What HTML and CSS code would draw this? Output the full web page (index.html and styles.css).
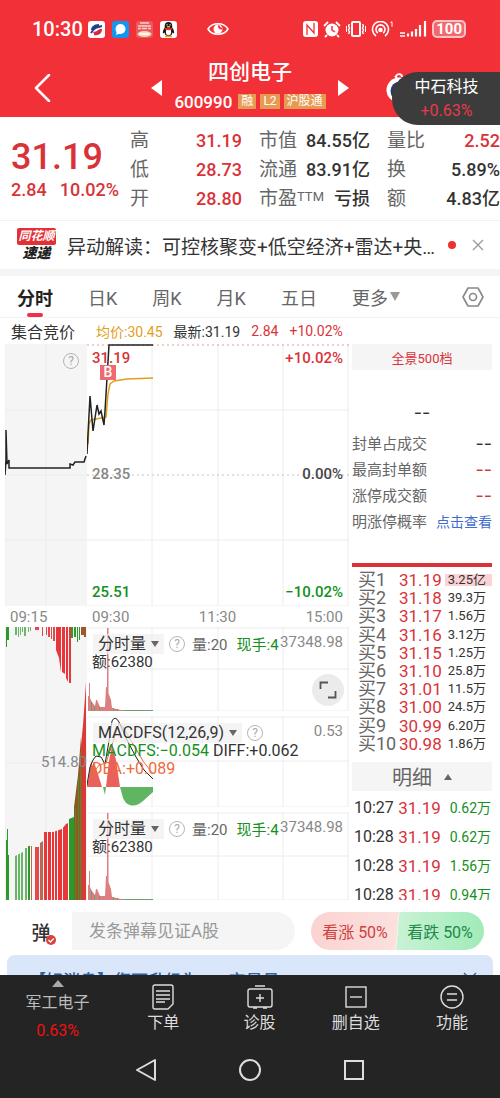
FILE: index.html
```html
<!DOCTYPE html>
<html lang="zh-CN">
<head>
  <meta charset="UTF-8">
  <meta name="viewport" content="width=device-width, initial-scale=1.0">
  <title>四创电子 600990</title>
  <link rel="stylesheet" href="styles.css">
</head>
<body>
  <header class="top">
    <div class="status-bar">
      <span class="clock">10:30</span>
      <div class="app-icons">
        <svg width="17" height="17" viewBox="0 0 17 17"><rect width="17" height="17" rx="3" fill="#fff"/><path d="M11 3C6 3 3 6 3 9c3 1 4-3 9-2-1-1-1-3-1-4z" fill="#1f3f90"/><path d="M6 14c5 1 8-2 8-6-3-1-4 3-9 3 1 1 1 2 1 3z" fill="#d9293a"/><path d="M3 12c3-5 6-6 11-7" stroke="#1f3f90" stroke-width="2" fill="none"/></svg>
        <svg width="17" height="17" viewBox="0 0 17 17"><rect width="17" height="17" rx="3" fill="#1296f0"/><circle cx="8.5" cy="8" r="5" fill="#fff"/><path d="M5 10l-1 4 5-2z" fill="#fff"/></svg>
        <svg width="17" height="17" viewBox="0 0 17 17"><rect width="17" height="17" rx="3" fill="#e85a5d"/><path d="M4 2h9M2 5h13M2 7.500h3M6 7.500h5M12 7.500h3" stroke="#fbd0c8" stroke-width="1.500"/><ellipse cx="8.500" cy="13" rx="7" ry="3" fill="#f7d9b9"/><path d="M4 13h9" stroke="#fff" stroke-width="1.500"/></svg>
        <svg width="17" height="17" viewBox="0 0 17 17"><rect width="17" height="17" rx="3" fill="#fff"/><path d="M8.500 1C5 1 4.500 4 4.800 6.500 3 9 2.500 11 3 12.500l1.500-1C5 14 6 15 8.500 15s3.500-1 4-3.500l1.500 1c.500-1.500 0-3.500-1.800-6C12.500 4 12 1 8.500 1z" fill="#171717"/><ellipse cx="8.500" cy="11" rx="2.600" ry="3.200" fill="#fff"/><path d="M5 7.500c2 1 5 1 7 0" stroke="#e33" stroke-width="1.500" fill="none"/><path d="M5 15.500h7M7 5.700h3" stroke="#f7a81b" stroke-width="1.400"/><path d="M7 3.200v1.300M10 3.200v1.300" stroke="#fff"/></svg>
      </div>
      <svg class="eye" width="22" height="16" viewBox="0 0 22 16" fill="none" stroke="#fff"><path d="M1 8C5 1 17 1 21 8 17 15 5 15 1 8z" stroke-width="1.600"/><circle cx="11" cy="8" r="4.500" fill="#fff" stroke="none"/><path d="M12 4.500a2.500 2.500 0 0 0 3 3" stroke="#f23037" stroke-width="2"/></svg>
      <div class="system-icons">
        <svg width="15" height="16" viewBox="0 0 15 16"><rect width="15" height="16" rx="3" fill="#fff"/><path d="M4 14V4l7 8V2" fill="none" stroke="#f23037" stroke-width="1.300"/></svg>
        <svg width="18" height="17" viewBox="0 0 18 17"><circle cx="9" cy="9" r="6.500" fill="#fff"/><path d="M1 5l4-4M17 5l-4-4M4 14l-2 2M14 14l2 2" stroke="#fff" stroke-width="1.800"/><path d="M9 5v4l3 2" stroke="#f23037" stroke-width="1.500" fill="none"/></svg>
        <svg width="20" height="16" viewBox="0 0 20 16" fill="none" stroke="#fff"><rect x="6" y="1" width="8" height="14" rx="1" stroke-width="2"/><path d="M3.500 3l-1 2 1 2-1 2 1 2-1 2M16.500 3l1 2-1 2 1 2-1 2 1 2" stroke-width="1.400"/><path d="M.5 5v6M19.500 5v6"/></svg>
        <svg width="23" height="17" viewBox="0 0 23 17" fill="none" stroke="#fff" stroke-width="1.600"><path d="M5 15a8 8 0 1 1 9 0M6.800 12a4.500 4.500 0 1 1 5.400 0"/><circle cx="9.500" cy="9" r="1.500" fill="#fff"/><path d="M19.500 1.500l1.500-.700v5" stroke-width="1"/></svg>
        <svg width="28" height="16" viewBox="0 0 28 16" stroke="#fff" stroke-width="2.200"><path d="M9 15.500v-3M13 15.500v-5M17 15.500V8M21 15.500V4M26 15.500V0"/><path d="M1 12h5M1 15h5" stroke-width="1.500"/></svg>
        <span class="battery">100</span>
      </div>
    </div>
    <div class="title-bar">
      <button class="icon-btn back" aria-label="返回"><svg width="17" height="28" viewBox="0 0 17 28" fill="none" stroke="#fff" stroke-width="2.500" stroke-linecap="round" stroke-linejoin="round"><path d="M15 1L2 14l13 13"/></svg></button>
      <div class="stock-switch">
        <button class="icon-btn" aria-label="上一只"><svg width="11" height="16" viewBox="0 0 11 16"><path d="M11 0v16L0 8z" fill="#fff"/></svg></button>
        <div class="stock-title">
          <h1>四创电子</h1>
          <p><span class="code">600990</span><span class="tag">融</span><span class="tag">L2</span><span class="tag">沪股通</span></p>
        </div>
        <button class="icon-btn" aria-label="下一只"><svg width="11" height="16" viewBox="0 0 11 16"><path d="M0 0v16l11-8z" fill="#fff"/></svg></button>
      </div>
      <button class="icon-btn robot" aria-label="智能助手"><svg width="32" height="30" viewBox="0 0 32 30"><circle cx="16" cy="17" r="12.500" fill="#fff"/><circle cx="17" cy="18" r="9.500" fill="#263b63"/><path d="M14 5l-2-2M13 3c2-3 6-2 6 1" stroke="#fff" stroke-width="1.800" fill="none"/></svg></button>
    </div>
  </header>

  <a class="float-quote" href="#">
    <span>中石科技</span>
    <span class="change">+0.63%</span>
  </a>

  <section class="quote">
    <div class="last">
      <strong>31.19</strong>
      <div class="diff"><span>2.84</span><span>10.02%</span></div>
    </div>
    <dl class="stats">
      <div><dt>高</dt><dd class="up">31.19</dd></div>
      <div><dt>市值</dt><dd>84.55亿</dd></div>
      <div><dt>量比</dt><dd class="up">2.52</dd></div>
      <div><dt>低</dt><dd class="up">28.73</dd></div>
      <div><dt>流通</dt><dd>83.91亿</dd></div>
      <div><dt>换</dt><dd>5.89%</dd></div>
      <div><dt>开</dt><dd class="up">28.80</dd></div>
      <div><dt>市盈<sup>TTM</sup></dt><dd>亏损</dd></div>
      <div><dt>额</dt><dd>4.83亿</dd></div>
    </dl>
  </section>

  <section class="news">
    <div class="news-logo"><b>同花顺</b><i>速递</i></div>
    <a href="#">异动解读：可控核聚变+低空经济+雷达+央…</a>
    <span class="dot"></span>
    <button class="icon-btn" aria-label="关闭"><svg width="12" height="12" viewBox="0 0 12 12" stroke="#999" stroke-width="1.300"><path d="M1 1l10 10M11 1L1 11"/></svg></button>
  </section>

  <nav class="tabs">
    <button class="tab active">分时</button>
    <button class="tab">日K</button>
    <button class="tab">周K</button>
    <button class="tab">月K</button>
    <button class="tab">五日</button>
    <button class="tab">更多<svg width="12" height="9" viewBox="0 0 12 9"><path d="M2 0h10L7 9z" fill="#999"/></svg></button>
    <button class="icon-btn settings" aria-label="设置"><svg width="22" height="22" viewBox="0 0 22 22" fill="none" stroke="#888" stroke-width="1.600" stroke-linejoin="round"><path d="M6 2h10l5 9-5 9H6l-5-9z"/><circle cx="11" cy="11" r="3.500"/></svg></button>
  </nav>

  <div class="legend">
    <span class="legend-name">集合竞价</span>
    <span class="avg">均价:30.45</span>
    <span>最新:31.19</span>
    <span class="up">2.84</span>
    <span class="up">+10.02%</span>
  </div>

  <main class="board">
    <div class="auction">
      <div class="plot price">
        <svg class="fill" viewBox="0 0 82 262" preserveAspectRatio="none">
          <path class="grid" d="M0 0V262M41 0V262M0 66H82M0 131H82M0 196H82"/>
          <path class="price-line" d="M0 131L1 116V86L2 120 4 116V124H65V120L68 121 70 118H79L81 112"/>
        </svg>
        <span class="help auction-help">?</span>
      </div>
      <div class="axis"><span>09:15</span></div>
      <div class="plot auction-volume">
        <svg class="fill" viewBox="0 0 82 273" preserveAspectRatio="none">
          <path class="grid" d="M0 0V273M41 0V273M0 136H82"/>
          <path fill="#2b9a2b" d="M1 0h3v13H2v7H1zM66 0h2v11h-2zM69 0h2v10h-2zM72 0h1v15h-1zM74 0h1v13h-1z"/>
          <path fill="#6bb56b" d="M10 0h2v8h-2zM13 0h1v10h-1zM15 0h1v8h-1zM17 0h1v5h-1zM19 0h2v9h-2zM23 0h1v5h-1zM25 0h1v4h-1z"/>
          <path fill="#e0494c" d="M30 0h4v3h-4zM37 0h1v9h-1zM41 0h1v8h-1zM43 0h2v10h-2zM46 0h1v12h-1zM48 0h2v14h-2z"/>
          <path fill="#e8363b" d="M51 0h5v45l-2-14-3-8zM57 0h3v47l-3-2zM61 0h2v55l-2-4zM64 0h2v56h-2z"/>
          <path fill="#9a5a2b" d="M76 0h5v10h-2V8h-3z"/>
          <path fill="#2b9a2b" d="M1 273V213h1V202h1V228h1V273zM23 273V219h2V273zM64 273V192l5-2V273z"/>
          <path fill="#6bb56b" d="M10 273V229l8-4V273zM20 273V221h2V273z"/>
          <path fill="#b86a55" d="M26 273V219h1V273zM35 273V216l3-2V273z"/>
          <path fill="#e0494c" d="M30 273V220h4V273z"/>
          <path fill="#e8363b" d="M39 273V205H48L57 202 61 197 63 196V273z"/>
          <path fill="#8a5a22" d="M69 273V180L73 148 76 110V273z"/>
          <path fill="#d93a36" d="M76 273V118L78 98 80 70 81 55V273z"/>
          <path fill="none" stroke="#4a8f2c" d="M70.500 182V273M73.500 150V273M75.500 125V273"/>
          <path fill="none" stroke="#f5f5f5" d="M12.500 225V273M15.500 225V273M42.500 204V273M46.500 204V273M49.500 203V273M52.500 202V273M57.500 200V273M63.500 190V273"/>
        </svg>
        <span class="label volume-label">514.80</span>
      </div>
    </div>

    <div class="session">
      <div class="plot price">
        <svg class="fill" viewBox="0 0 262 262" preserveAspectRatio="none">
          <path class="grid" d="M65 0V262M131 0V262M196 0V262M261 0V262M0 66H262M0 196H262M0 262H262"/>
          <path class="dashed" d="M0 131H262"/>
          <path class="dashed limit" d="M0 1H262"/>
          <path class="avg-line" d="M1 100L2 80 4 76 9 75 19 73 21 50 23 40 27 37 40 35 66 34"/>
          <path class="price-line" d="M0 110L1 90 3 52 6 87 10 61 12 70 14 67 17 81 18 67 20 34 22 1H66"/>
        </svg>
        <span class="label top-left up">31.19</span>
        <span class="label top-right up">+10.02%</span>
        <span class="label mid-left">28.35</span>
        <span class="label mid-right">0.00%</span>
        <span class="label bottom-left down">25.51</span>
        <span class="label bottom-right down">−10.02%</span>
        <span class="buy-mark">B</span>
      </div>
      <div class="axis"><span>09:30</span><span>11:30</span><span>15:00</span></div>
      <div class="subs">
        <div class="plot">
          <svg class="fill" viewBox="0 0 262 84" preserveAspectRatio="none">
            <path class="grid" d="M65 0V84M131 0V84M196 0V84M261 0V84M0 1H262M0 42H262M0 84H262"/>
            <path fill="#dd7f80" d="M1 84V69H2V56H3V71L5 75 8 79 9 73H10L13 80H18L19 60H20V1H21.500V66L24 73 25 81 34 83 66 83V84z"/>
            <path stroke="#6f9d6f" d="M4.500 84V75M7.500 84V79M12.500 84V80M26.500 84V81M30.500 84V82M36 83.500H66"/>
          </svg>
          <div class="indicator">
            <button class="pick">分时量<i></i></button><span class="help">?</span><span class="gray">量:20</span><span class="down">现手:4</span>
          </div>
          <p class="indicator-values">额:62380</p>
          <span class="label scale">37348.98</span>
        </div>
        <div class="plot">
          <svg class="fill" viewBox="0 0 262 91" preserveAspectRatio="none">
            <path class="grid" d="M65 0V91M131 0V91M196 0V91M261 0V91M0 1H262M0 45H262M0 91H262"/>
            <path fill="#e9605c" d="M0 71L2 60 4 45 5 50 7 46 10 55 15 71zM19 71L22 45 25 30 29 44 33 71z"/>
            <path fill="#5fb562" d="M16 71h3l-1 8zM33 71H66V76L56 85C48 92 40 91 36 82z"/>
            <path class="dea-line" d="M0 70L7 56 12 49 19 47 24 32 32 7 36 11 46 28 56 45 66 58"/>
            <path class="dif-line" d="M0 69L3 51 6 44 9 40 14 41 18 48 22 25 25 5Q28-1 32 6L40 24 49 41 57 54 66 63"/>
          </svg>
          <div class="indicator">
            <button class="pick">MACDFS(12,26,9)<i></i></button><span class="help">?</span>
          </div>
          <p class="indicator-values macd"><span class="down">MACDFS:−0.054</span> <span>DIFF:+0.062</span> <span class="dea">DEA:+0.089</span></p>
          <span class="label scale">0.53</span>
        </div>
        <div class="plot">
          <svg class="fill" viewBox="0 0 262 88" preserveAspectRatio="none">
            <path class="grid" d="M65 0V88M131 0V88M196 0V88M261 0V88M0 1H262M0 44H262M0 88H262"/>
            <path fill="#dd7f80" d="M1 88V73H2V59H3V75L5 79 8 83 9 77H10L13 84H18L19 64H20V1H21.500V70L24 77 25 85 34 87 66 87V88z"/>
            <path stroke="#6f9d6f" d="M4.500 88V79M7.500 88V83M12.500 88V84M26.500 88V85M30.500 88V86M36 87.500H66"/>
          </svg>
          <div class="indicator">
            <button class="pick">分时量<i></i></button><span class="help">?</span><span class="gray">量:20</span><span class="down">现手:4</span>
          </div>
          <p class="indicator-values">额:62380</p>
          <span class="label scale">37348.98</span>
        </div>
        <button class="expand" aria-label="全屏"><svg width="18" height="18" viewBox="0 0 18 18" fill="none" stroke="#555" stroke-width="1.800"><path d="M1.500 8V1.500H9M16.500 10v6.500H9"/></svg></button>
      </div>
    </div>

    <aside class="book">
      <button class="depth">全景500档</button>
      <p class="depth-value">--</p>
      <dl class="limit-info">
        <div><dt>封单占成交</dt><dd>--</dd></div>
        <div><dt>最高封单额</dt><dd class="up">--</dd></div>
        <div><dt>涨停成交额</dt><dd class="up">--</dd></div>
        <div><dt>明涨停概率</dt><dd><a href="#">点击查看</a></dd></div>
      </dl>
      <table class="bids">
        <tr><th>买1</th><td>31.19</td><td class="first">3.25亿</td></tr>
        <tr><th>买2</th><td>31.18</td><td>39.3万</td></tr>
        <tr><th>买3</th><td>31.17</td><td>1.56万</td></tr>
        <tr><th>买4</th><td>31.16</td><td>3.12万</td></tr>
        <tr><th>买5</th><td>31.15</td><td>1.25万</td></tr>
        <tr><th>买6</th><td>31.10</td><td>25.8万</td></tr>
        <tr><th>买7</th><td>31.01</td><td>11.5万</td></tr>
        <tr><th>买8</th><td>31.00</td><td>24.5万</td></tr>
        <tr><th>买9</th><td>30.99</td><td>6.20万</td></tr>
        <tr><th>买10</th><td>30.98</td><td>1.86万</td></tr>
      </table>
      <button class="detail">明细<svg width="8" height="6" viewBox="0 0 8 6"><path d="M4 0l4 6H0z" fill="#666"/></svg></button>
      <div class="trades">
        <table>
          <tr><td>10:27</td><td class="up">31.19</td><td class="down">0.62万</td></tr>
          <tr><td>10:28</td><td class="up">31.19</td><td class="down">0.62万</td></tr>
          <tr><td>10:28</td><td class="up">31.19</td><td class="down">1.56万</td></tr>
          <tr><td>10:28</td><td class="up">31.19</td><td class="down">0.94万</td></tr>
        </table>
      </div>
    </aside>
  </main>

  <section class="chat">
    <button class="danmu" aria-label="弹幕开关">弹<svg width="10" height="10" viewBox="0 0 10 10"><circle cx="5" cy="5" r="5" fill="#d9423a"/><path d="M2.500 5l2 2 3.200-3.500" stroke="#fff" stroke-width="1.300" fill="none"/></svg></button>
    <input type="text" placeholder="发条弹幕见证A股" aria-label="发条弹幕">
    <div class="vote">
      <button class="vote-up">看涨 50%</button>
      <button class="vote-down">看跌 50%</button>
    </div>
  </section>

  <section class="banner">
    <a href="#">【好消息】您可升级为T+0交易员!</a>
    <svg width="14" height="14" viewBox="0 0 14 14" stroke="#3f6da8" stroke-width="1.500"><path d="M1 1l12 12M13 1L1 13"/></svg>
  </section>

  <footer class="bottom">
    <nav class="actions">
      <a href="#" class="index"><svg width="12" height="7" viewBox="0 0 12 7"><path d="M6 0l6 7H0z" fill="#aaa"/></svg><span>军工电子</span><span class="index-change">0.63%</span></a>
      <a href="#"><svg width="24" height="26" viewBox="0 0 24 26" fill="none" stroke="#ddd" stroke-width="1.400"><path d="M4 1h16q2 0 2 2v17l-5 5H4q-2 0-2-2V3q0-2 2-2zM5 7h14M5 11h14M5 15h14M5 18h9"/></svg><span>下单</span></a>
      <a href="#"><svg width="28" height="26" viewBox="0 0 28 26" fill="none" stroke="#ddd" stroke-width="1.400"><rect x="2" y="5" width="24" height="18" rx="2"/><path d="M9 2h10M14 10v8M10 14h8M7 24h4M17 24h4"/></svg><span>诊股</span></a>
      <a href="#"><svg width="24" height="26" viewBox="0 0 24 26" fill="none" stroke="#ddd" stroke-width="1.400"><rect x="2" y="3" width="20" height="20"/><path d="M6 13h12"/></svg><span>删自选</span></a>
      <a href="#"><svg width="24" height="26" viewBox="0 0 24 26" fill="none" stroke="#ddd" stroke-width="1.400"><circle cx="12" cy="13" r="11"/><path d="M7 10h10M7 16h10"/></svg><span>功能</span></a>
    </nav>
    <div class="system-nav">
      <button class="icon-btn" aria-label="后退"><svg width="22" height="24" viewBox="0 0 22 24" fill="none" stroke="#ddd" stroke-width="2" stroke-linejoin="round"><path d="M20 2v20L2 12z"/></svg></button>
      <button class="icon-btn" aria-label="主页"><svg width="24" height="24" viewBox="0 0 24 24" fill="none" stroke="#ddd" stroke-width="2"><circle cx="12" cy="12" r="10"/></svg></button>
      <button class="icon-btn" aria-label="最近任务"><svg width="22" height="24" viewBox="0 0 22 24" fill="none" stroke="#ddd" stroke-width="2"><rect x="2" y="3" width="18" height="18"/></svg></button>
    </div>
  </footer>
</body>
</html>
```
FILE: styles.css
```css
* {
  box-sizing: border-box;
}
body {
  position: relative;
  margin: 0;
  font-family: Roboto, "Noto Sans CJK SC", sans-serif;
  color: #333;
  background-color: #fff;
  overflow-x: hidden;
}
h1, p, dl, dd {
  margin: 0;
}
button {
  font-family: inherit;
  color: inherit;
  border: none;
  background: none;
  padding: 0;
  cursor: pointer;
}
a {
  color: inherit;
  text-decoration: none;
}
svg {
  display: block;
  flex-shrink: 0;
}
table {
  border-collapse: collapse;
  width: 100%;
}
th, td {
  padding: 0;
  font-weight: 400;
}
.icon-btn {
  display: flex;
}
.up {
  color: #d9333a;
}
.down {
  color: #14901c;
}
.gray {
  color: #666;
}

/* header */
.top {
  background-color: #f23037;
  color: #fff;
}
.status-bar {
  display: flex;
  align-items: center;
  height: 58px;
  padding: 0 34px 0 32px;
}
.clock {
  font-size: 20px;
  font-weight: 500;
}
.app-icons {
  display: flex;
  gap: 7px;
  margin-left: 5px;
}
.eye {
  margin-left: 30px;
}
.system-icons {
  display: flex;
  align-items: center;
  gap: 5px;
  margin-left: auto;
}
.battery {
  border: 2px solid #fbc4c6;
  border-radius: 5px;
  background-color: #f2686d;
  font-size: 15px;
  line-height: 14px;
  font-weight: 700;
  padding: 0 2px;
}
.title-bar {
  display: grid;
  grid-template-columns: 1fr auto 1fr;
  align-items: center;
  height: 59px;
}
.back {
  margin-left: 34px;
}
.stock-switch {
  display: flex;
  align-items: center;
  gap: 12px;
}
.stock-title {
  text-align: center;
}
.stock-title h1 {
  font-size: 21px;
  line-height: 28px;
  font-weight: 500;
}
.stock-title p {
  display: flex;
  align-items: center;
  gap: 4px;
  height: 31px;
}
.code {
  font-size: 17px;
  font-weight: 500;
  margin-right: 2px;
}
.tag {
  background-color: #e79a52;
  font-size: 12px;
  line-height: 15px;
  padding: 0 3px;
}
.robot {
  justify-self: start;
  margin-left: 34px;
}
.float-quote {
  position: absolute;
  top: 72px;
  right: 0;
  display: flex;
  flex-direction: column;
  align-items: center;
  width: 108px;
  height: 53px;
  padding: 3px 0 0 1px;
  border-radius: 26px 0 0 26px;
  background-color: #3c3c3c;
  color: #fff;
  font-size: 16px;
  line-height: 24px;
}
.float-quote .change {
  color: #e83a48;
}

/* quote */
.quote {
  display: flex;
  align-items: center;
  height: 103px;
  padding: 8px 0 6px 11px;
  overflow: hidden;
}
.last {
  width: 119px;
  flex-shrink: 0;
  color: #d9333a;
}
.last strong {
  display: block;
  font-size: 36px;
  line-height: 40px;
  font-weight: 500;
}
.diff {
  display: flex;
  gap: 13px;
  font-size: 18px;
  line-height: 26px;
  font-weight: 500;
}
.stats {
  flex: 1;
  display: grid;
  grid-template-columns: 112fr 111fr 113fr;
  column-gap: 17px;
  row-gap: 1px;
}
.stats div {
  display: flex;
  justify-content: space-between;
  white-space: nowrap;
}
.stats dt {
  font-size: 19px;
  line-height: 28px;
  color: #666;
}
.stats sup {
  font-size: 13px;
  line-height: 1;
  vertical-align: 4px;
}
.stats dd {
  font-size: 18px;
  line-height: 28px;
  font-weight: 500;
}

/* news */
.news {
  display: flex;
  align-items: center;
  height: 56px;
  padding: 0 16px 0 17px;
  border-top: 1px solid #f2f2f2;
  border-bottom: 7px solid #f5f5f5;
}
.news-logo {
  display: flex;
  flex-direction: column;
  align-items: center;
  width: 39px;
  font-size: 12px;
  line-height: 17px;
}
.news-logo b {
  width: 39px;
  border-radius: 2px;
  background-color: #e23035;
  color: #fff;
  text-align: center;
  font-style: italic;
}
.news-logo i {
  font-size: 14px;
  font-weight: 900;
  color: #222;
}
.news a {
  flex: 1;
  min-width: 0;
  margin: 0 8px 0 11px;
  font-size: 19px;
  white-space: nowrap;
}
.dot {
  width: 8px;
  height: 8px;
  margin-right: 16px;
  border-radius: 50%;
  background-color: #f0302f;
}

/* tabs */
.tabs {
  display: flex;
  align-items: center;
  gap: 35px;
  height: 42px;
  padding: 0 16px 0 17px;
  border-bottom: 1px solid #f2f2f2;
}
.tab {
  position: relative;
  display: flex;
  align-items: center;
  height: 41px;
  font-size: 18px;
  color: #666;
}
.tab.active {
  font-weight: 700;
  color: #222;
}
.tab.active::after {
  content: "";
  position: absolute;
  left: 10px;
  right: 10px;
  bottom: 0;
  height: 4px;
  border-radius: 2px;
  background-color: #f0304a;
}
.settings {
  margin-left: auto;
}
.legend {
  display: flex;
  align-items: center;
  gap: 11px;
  height: 26px;
  padding: 0 11px;
  font-size: 14px;
}
.legend-name {
  font-size: 16px;
  margin-right: 10px;
}
.avg {
  color: #dfa01c;
}

/* charts */
.board {
  display: grid;
  grid-template-columns: 82fr 262fr 143fr;
  padding: 0 8px 0 5px;
}
.auction, .session {
  min-width: 0;
}
.plot {
  position: relative;
}
.price {
  height: 262px;
}
.auction .plot {
  background-color: #f5f5f5;
}
.auction-volume {
  height: 273px;
}
.fill {
  position: absolute;
  inset: 0;
  width: 100%;
  height: 100%;
}
.grid, .dashed, .price-line, .avg-line, .dea-line, .dif-line {
  fill: none;
  vector-effect: non-scaling-stroke;
}
.grid {
  stroke: #ececec;
}
.dashed {
  stroke: #c4c4c4;
  stroke-dasharray: 2 3;
}
.limit {
  stroke: #e59a9a;
}
.price-line {
  stroke: #222;
  stroke-width: 1.5;
}
.avg-line {
  stroke: #dfa01c;
  stroke-width: 1.5;
}
.dea-line {
  stroke: #ee6b3b;
}
.dif-line {
  stroke: #222;
}
.label {
  position: absolute;
  font-size: 15px;
  line-height: 18px;
  color: #888;
}
.label.up {
  color: #d9333a;
}
.label.down {
  color: #14901c;
}
.price .label {
  font-weight: 500;
}
.top-left {
  top: 5px;
  left: 5px;
}
.top-right {
  top: 5px;
  right: 6px;
}
.mid-left {
  top: 121px;
  left: 5px;
}
.mid-right {
  top: 121px;
  right: 6px;
  color: #444;
}
.bottom-left {
  bottom: 5px;
  left: 5px;
}
.bottom-right {
  bottom: 5px;
  right: 6px;
}
.volume-label {
  top: 126px;
  right: 0;
}
.scale {
  top: 6px;
  right: 6px;
}
.buy-mark {
  position: absolute;
  top: 21px;
  left: 13px;
  width: 16px;
  height: 15px;
  background-color: #ee6a70;
  color: #fff;
  font-size: 14px;
  font-weight: 500;
  line-height: 15px;
  text-align: center;
}
.help {
  width: 16px;
  height: 16px;
  border: 1px solid #b5b5b5;
  border-radius: 50%;
  font-size: 12px;
  line-height: 14px;
  text-align: center;
  color: #aaa;
}
.auction-help {
  position: absolute;
  top: 9px;
  right: 8px;
}
.axis {
  display: flex;
  justify-content: space-between;
  height: 21px;
  padding: 0 6px 0 5px;
  font-size: 15px;
  line-height: 22px;
  color: #888;
}
.subs {
  position: relative;
  display: grid;
  grid-template-rows: 84px 91px 88px;
  row-gap: 5px;
}
.indicator {
  position: relative;
  display: flex;
  align-items: center;
  height: 26px;
  padding: 7px 0 0 6px;
  font-size: 15px;
  white-space: nowrap;
}
.indicator .help {
  margin: 0 7px 0 5px;
}
.indicator .down {
  margin-left: 9px;
}
.pick {
  display: flex;
  align-items: center;
  gap: 5px;
  height: 20px;
  padding: 0 5px;
  background-color: rgba(240, 240, 240, 0.7);
  font-size: 16px;
  line-height: 20px;
}
.pick i {
  border: 4px solid transparent;
  border-top: 6px solid #666;
  border-bottom: none;
}
.indicator-values {
  position: relative;
  padding-left: 5px;
  font-size: 15px;
  line-height: 18px;
}
.macd {
  font-size: 16px;
}
.dea {
  display: block;
  color: #ee6b3b;
}
.expand {
  position: absolute;
  top: 47px;
  right: 5px;
  display: flex;
  align-items: center;
  justify-content: center;
  width: 32px;
  height: 32px;
  border-radius: 50%;
  background-color: #ebebeb;
}

/* order book */
.book {
  margin-left: 3px;
}
.depth {
  display: block;
  width: 100%;
  height: 26px;
  background-color: #f5f5f5;
  color: #d9333a;
  font-size: 13px;
}
.depth-value {
  padding: 30px 0 5px;
  font-family: Inter, sans-serif;
  font-size: 18px;
  line-height: 26px;
  text-align: center;
}
.limit-info div {
  display: flex;
  justify-content: space-between;
  height: 26px;
  line-height: 26px;
  white-space: nowrap;
}
.limit-info dt {
  font-size: 15px;
  color: #666;
}
.limit-info dd {
  font-family: Inter, "Noto Sans CJK SC", sans-serif;
  font-size: 18px;
}
.limit-info a {
  display: block;
  font-size: 14px;
  color: #3f6ed0;
}
.bids {
  height: 190px;
  margin-top: 28px;
  padding-top: 4px;
  border-top: 4px solid #d9333a;
  border-collapse: separate;
  border-spacing: 0;
}
.bids th, .bids td {
  line-height: 18px;
  white-space: nowrap;
}
.bids th {
  width: 47px;
  padding-left: 6px;
  font-size: 18px;
  text-align: left;
  color: #666;
}
.bids td:nth-child(2) {
  font-size: 17px;
  color: #d9333a;
}
.bids td:last-child {
  padding-right: 6px;
  font-size: 13px;
  text-align: right;
}
.bids .first {
  background: linear-gradient(#f9d3d6, #f9d3d6) center / 100% 12px no-repeat;
}
.detail {
  display: flex;
  align-items: center;
  justify-content: center;
  gap: 12px;
  width: 100%;
  height: 29px;
  margin-top: 9px;
  background-color: #f5f5f5;
  font-size: 20px;
  color: #666;
}
.trades {
  height: 109px;
  padding-top: 2px;
  overflow: hidden;
}
.trades tr {
  height: 29px;
}
.trades td {
  font-size: 16px;
  line-height: 20px;
  white-space: nowrap;
}
.trades td:first-child {
  padding-left: 2px;
}
.trades td:nth-child(2) {
  font-size: 17px;
}
.trades td:last-child {
  padding-right: 1px;
  font-size: 14px;
  text-align: right;
}

/* chat */
.chat {
  display: flex;
  align-items: center;
  height: 55px;
  padding: 7px 16px 0;
}
.danmu {
  position: relative;
  width: 56px;
  height: 37px;
  padding-right: 6px;
  font-size: 19px;
  font-weight: 500;
}
.danmu svg {
  position: absolute;
  right: 16px;
  bottom: 5px;
}
.chat input {
  flex: 1;
  min-width: 0;
  height: 38px;
  padding: 0 17px;
  border: none;
  border-radius: 0 19px 19px 0;
  background-color: #f5f5f5;
  font-family: inherit;
  font-size: 17px;
}
.chat input::placeholder {
  color: #999;
}
.vote {
  display: flex;
  margin-left: 16px;
}
.vote button {
  width: 88px;
  height: 38px;
  font-size: 16px;
}
.vote .vote-up {
  border-radius: 19px 0 0 19px;
  background: linear-gradient(90deg, #fbd3d0, #fbe1df);
  clip-path: polygon(0 0, 100% 0, 96% 100%, 0 100%);
  color: #d0403c;
}
.vote .vote-down {
  margin-left: -3px;
  border-radius: 0 19px 19px 0;
  background: linear-gradient(90deg, #c9f2d6, #a0ebb8);
  clip-path: polygon(4% 0, 100% 0, 100% 100%, 0 100%);
  color: #1d8a47;
}
.banner {
  display: flex;
  justify-content: space-between;
  height: 20px;
  margin: 0 7px;
  padding: 12px 16px 0 22px;
  border-radius: 8px 8px 0 0;
  background-color: #dae6f9;
  overflow: hidden;
}
.banner a {
  font-size: 17px;
  font-weight: 500;
  color: #2d62a3;
}
.banner svg {
  margin-top: 5px;
}

/* bottom */
.bottom {
  background-color: #242424;
  color: #ddd;
}
.actions {
  display: grid;
  grid-template-columns: 115fr repeat(4, 96fr);
  height: 66px;
}
.actions a {
  display: flex;
  flex-direction: column;
  align-items: center;
  padding-top: 9px;
  font-size: 16px;
  line-height: 26px;
}
.actions .index {
  padding-top: 5px;
  line-height: 28px;
  color: #bbb;
}
.actions .index svg {
  margin-bottom: 2px;
}
.actions .index-change {
  color: #f01010;
}
.system-nav {
  display: flex;
  justify-content: space-between;
  align-items: center;
  height: 57px;
  padding: 0 27%;
}
```
